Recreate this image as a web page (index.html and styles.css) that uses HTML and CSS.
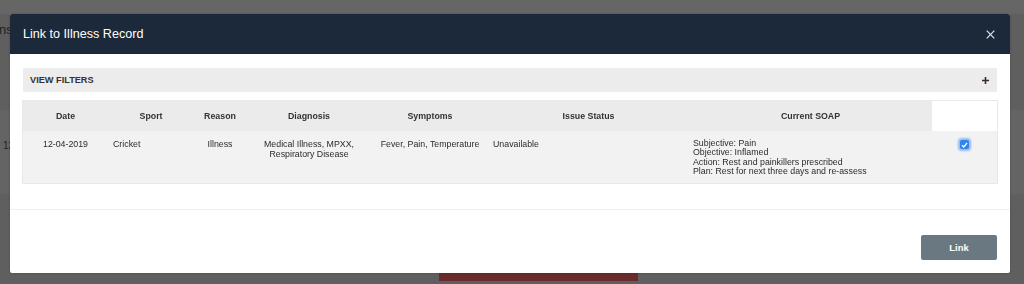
FILE: index.html
```html
<!DOCTYPE html>
<html lang="en">
<head>
    <meta charset="UTF-8">
    <meta name="viewport" content="width=device-width, initial-scale=1.0">
    <title>Link to Illness Record</title>
    <link rel="stylesheet" href="styles.css">
</head>
<body>
    <div class="page">
        <div class="page-top"></div>
        <div class="page-title">ns</div>
        <div class="page-row"><span class="page-cell">12</span></div>
        <div class="page-actions">
            <div class="page-btn"></div>
        </div>
    </div>

    <div class="modal">
        <div class="modal-header">
            <h2 class="modal-title">Link to Illness Record</h2>
            <button class="close-btn" aria-label="Close">
                <svg width="9" height="9" viewBox="0 0 9 9"><path d="M0.7 0.7L8.3 8.3M8.3 0.7L0.7 8.3" stroke="#e4e7ea" stroke-width="1.2" fill="none"/></svg>
            </button>
        </div>

        <div class="modal-body">
            <div class="filter-bar">
                <span class="filter-label">VIEW FILTERS</span>
                <span class="filter-toggle">
                    <svg width="7" height="7" viewBox="0 0 7 7"><path d="M3.5 0V7M0 3.5H7" stroke="#3a2a2a" stroke-width="1.6"/></svg>
                </span>
            </div>

            <table class="records">
                <colgroup>
                    <col style="width:85px">
                    <col style="width:86px">
                    <col style="width:52px">
                    <col style="width:126px">
                    <col style="width:116px">
                    <col style="width:201px">
                    <col style="width:243px">
                    <col style="width:65px">
                </colgroup>
                <thead>
                    <tr>
                        <th>Date</th>
                        <th>Sport</th>
                        <th>Reason</th>
                        <th>Diagnosis</th>
                        <th>Symptoms</th>
                        <th>Issue Status</th>
                        <th>Current SOAP</th>
                        <th class="blank"></th>
                    </tr>
                </thead>
                <tbody>
                    <tr>
                        <td class="center">12-04-2019</td>
                        <td>Cricket</td>
                        <td class="center">Illness</td>
                        <td class="center">Medical Illness, MPXX,<br>Respiratory Disease</td>
                        <td class="center">Fever, Pain, Temperature</td>
                        <td>Unavailable</td>
                        <td class="soap">Subjective: Pain<br>Objective: Inflamed<br>Action: Rest and painkillers prescribed<br>Plan: Rest for next three days and re-assess</td>
                        <td class="center">
                            <span class="check">
                                <svg width="7" height="6" viewBox="0 0 7 6"><path d="M1 3.2L2.8 5L6 1" stroke="#fff" stroke-width="1.3" fill="none"/></svg>
                            </span>
                        </td>
                    </tr>
                </tbody>
            </table>
        </div>

        <div class="modal-footer">
            <button class="link-btn">Link</button>
        </div>
    </div>
</body>
</html>
```

FILE: styles.css
```css
body {
    margin: 0;
    background: #5f5f5f;
    font-family: 'Liberation Sans', Arial, sans-serif;
    height: 284px;
    overflow: hidden;
}
/* Page behind the overlay */
.page {
    display: flex;
    flex-direction: column;
}
.page-top {
    height: 14px;
    background: #666;
}
.page-title {
    height: 96px;
    margin-left: -1px;
    padding-top: 8px;
    box-sizing: border-box;
    font-size: 13px;
    color: #1e1e1e;
}
.page-row {
    height: 84px;
    background: #646464;
    padding: 30px 0 0 3px;
    box-sizing: border-box;
    font-size: 10px;
    color: #222;
}
.page-actions {
    height: 90px;
    display: flex;
    justify-content: flex-start;
    padding: 77px 0 0 439px;
    box-sizing: border-box;
}
.page-btn {
    width: 199px;
    height: 10px;
    background: #692b2b;
}
/* Modal */
.modal {
    position: fixed;
    left: 10px;
    top: 14px;
    width: 1000px;
    height: 259px;
    background: #fff;
    border-radius: 2px;
    display: flex;
    flex-direction: column;
    overflow: hidden;
    box-shadow: 0 0 2px rgba(0,0,0,0.25);
}
.modal-header {
    height: 40px;
    background: #1c293a;
    display: flex;
    align-items: center;
    justify-content: space-between;
    padding: 0 15px 0 13px;
    flex-shrink: 0;
}
.modal-title {
    margin: 0;
    font-size: 12.6px;
    font-weight: normal;
    color: #fff;
}
.close-btn {
    background: none;
    border: none;
    padding: 0;
    width: 9px;
    height: 9px;
    display: flex;
    cursor: pointer;
}
.modal-body {
    padding: 14px 13px 26px 13px;
    border-bottom: 1px solid #efefef;
}
.filter-bar {
    height: 24px;
    background: #ececec;
    display: flex;
    align-items: center;
    justify-content: space-between;
    padding: 0 8px 0 7px;
    margin-bottom: 9px;
}
.filter-label {
    font-size: 9.2px;
    font-weight: bold;
    color: #333;
}
.filter-toggle {
    display: flex;
}
.records {
    width: 974px;
    border-collapse: collapse;
    table-layout: fixed;
    box-shadow: 0 0 0 1px #e9e9e9;
    font-size: 8.8px;
    color: #2b2b2b;
}
.records th {
    height: 30px;
    padding: 0 4px;
    background: #ebebeb;
    font-weight: bold;
    text-align: center;
    color: #333;
}
.records th.blank {
    background: #fff;
}
.records td {
    height: 52px;
    padding: 8px 5px 0 5px;
    box-sizing: border-box;
    vertical-align: top;
    background: #f2f2f2;
    line-height: 10px;
    text-align: left;
}
.records td.center {
    text-align: center;
}
.records td.soap {
    padding-left: 4px;
    line-height: 9.4px;
}
.check {
    display: inline-flex;
    align-items: center;
    justify-content: center;
    width: 9px;
    height: 9px;
    margin-top: 1px;
    border-radius: 2px;
    background: #2f84f0;
    box-shadow: 0 0 2px 2px rgba(70,140,240,0.55);
}
.modal-footer {
    display: flex;
    justify-content: flex-end;
    padding: 25px 13px 0 13px;
}
.link-btn {
    width: 76px;
    height: 25px;
    border: none;
    border-radius: 2px;
    background: #6a7981;
    color: #fff;
    font-family: 'Liberation Sans', Arial, sans-serif;
    font-size: 9.4px;
    font-weight: bold;
    cursor: pointer;
}
```
